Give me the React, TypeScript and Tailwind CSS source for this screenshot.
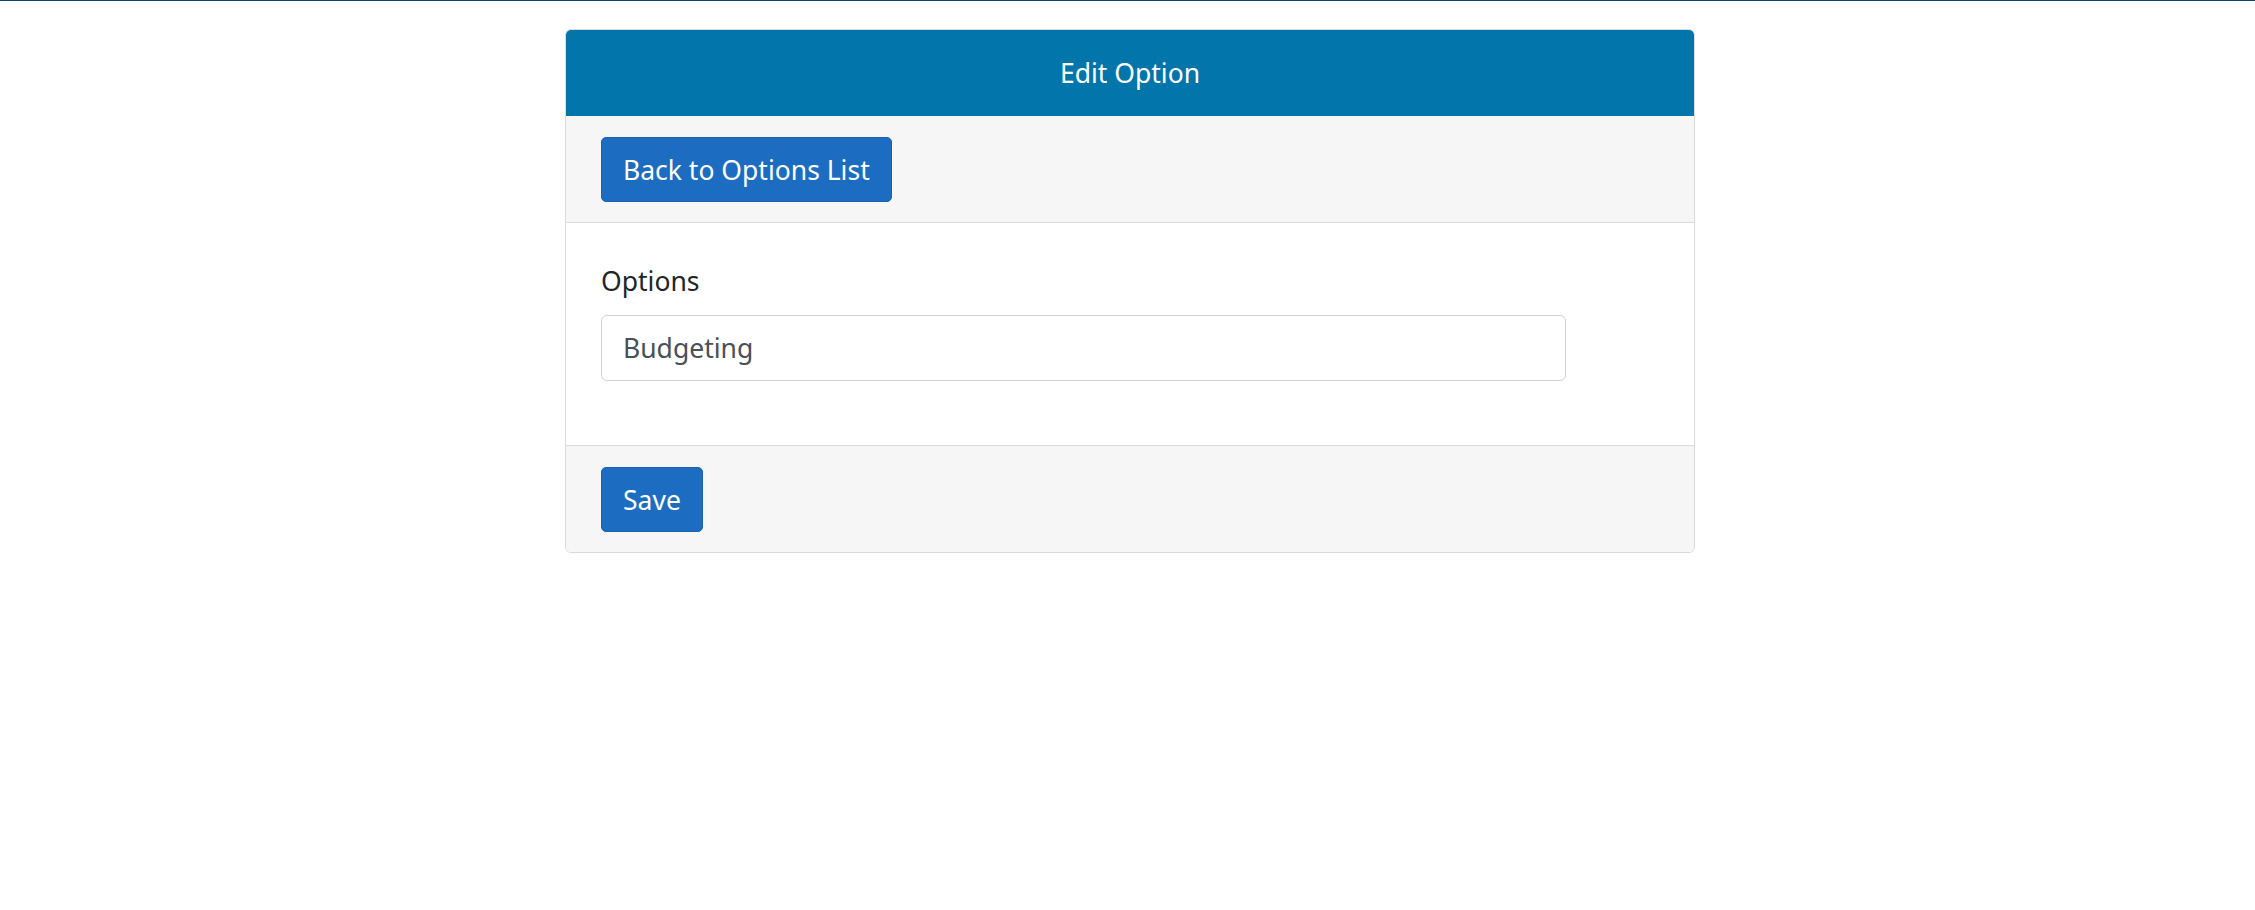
export default function App() {
  return (
    <div className="min-h-[910px] w-full bg-white border-t border-[#0b4a6b] font-['Noto_Sans','Open_Sans',sans-serif] text-[#212529]">
      <div className="pl-[565px] pt-[28px]">
        <div className="w-[1130px] rounded-[6px] border border-[#dadada] overflow-hidden">
          {/* Header */}
          <div className="h-[86px] pt-[2px] bg-[#0275ab] flex items-center justify-center text-white text-[26.5px]">
            Edit Option
          </div>

          {/* Top bar */}
          <div className="h-[107px] bg-[#f6f6f6] border-b border-[#dadada] px-[35px] flex items-center">
            <button className="h-[65px] px-[21px] pt-[3px] rounded-[5px] bg-[#1c6dc1] border border-[#1a62ad] text-white text-[26.5px]">
              Back to Options List
            </button>
          </div>

          {/* Body */}
          <div className="h-[222px] bg-white px-[35px] pt-[38px]">
            <label className="block text-[26.5px] leading-[40px] mb-[14px]">Options</label>
            <div className="w-[965px] h-[66px] rounded-[6px] border border-[#ced4da] flex items-center px-[21px] pt-[2px] text-[26.5px] text-[#495057]">
              Budgeting
            </div>
          </div>

          {/* Footer */}
          <div className="h-[107px] bg-[#f6f6f6] border-t border-[#dadada] px-[35px] flex items-center">
            <button className="h-[65px] px-[21px] pt-[3px] rounded-[5px] bg-[#1c6dc1] border border-[#1a62ad] text-white text-[26.5px]">
              Save
            </button>
          </div>
        </div>
      </div>
    </div>
  );
}
